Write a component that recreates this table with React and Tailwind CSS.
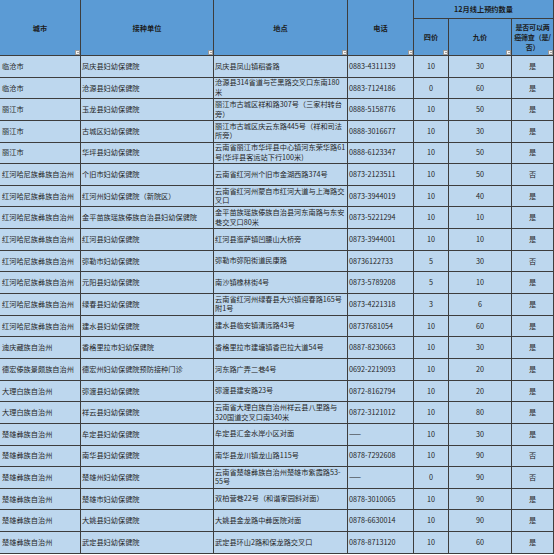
const rows = [
  ['临沧市', '凤庆县妇幼保健院', ['凤庆县凤山镇稻香路'], '0883-4311139', '10', '30', '是'],
  ['临沧市', '沧源县妇幼保健院', ['沧源县314省道与芒黑路交叉口东南180', '米'], '0883-7124186', '0', '60', '是'],
  ['丽江市', '玉龙县妇幼保健院', ['丽江市古城区祥和路307号（三家村转台', '旁）'], '0888-5158776', '10', '50', '是'],
  ['丽江市', '古城区妇幼保健院', ['丽江市古城区庆云东路445号（祥和司法', '所旁）'], '0888-3016677', '10', '30', '是'],
  ['丽江市', '华坪县妇幼保健院', ['云南省丽江市华坪县中心镇河东荣华路61', '号(华坪县客运站下行100米)'], '0888-6123347', '10', '50', '是'],
  ['红河哈尼族彝族自治州', '个旧市妇幼保健院', ['云南省红河州个旧市金湖西路374号'], '0873-2123511', '10', '50', '否'],
  ['红河哈尼族彝族自治州', '红河州妇幼保健院（新院区）', ['云南省红河州蒙自市红河大道与上海路交', '叉口'], '0873-3944019', '10', '40', '是'],
  ['红河哈尼族彝族自治州', '金平苗族瑶族傣族自治县妇幼保健院', ['金平苗族瑶族傣族自治县河东南路与东安', '巷交叉口80米'], '0873-5221294', '10', '10', '是'],
  ['红河哈尼族彝族自治州', '红河县妇幼保健院', ['红河县迤萨镇凹腰山大桥旁'], '0873-3944001', '10', '10', '是'],
  ['红河哈尼族彝族自治州', '弥勒市妇幼保健院', ['弥勒市弥阳街道民康路'], '08736122733', '5', '30', '否'],
  ['红河哈尼族彝族自治州', '元阳县妇幼保健院', ['南沙镇橡林街4号'], '0873-5789208', '5', '10', '是'],
  ['红河哈尼族彝族自治州', '绿春县妇幼保健院', ['云南省红河州绿春县大兴镇迎春路165号', '附1号'], '0873-4221318', '3', '6', '是'],
  ['红河哈尼族彝族自治州', '建水县妇幼保健院', ['建水县临安镇清远路43号'], '08737681054', '10', '60', '是'],
  ['迪庆藏族自治州', '香格里拉市妇幼保健院', ['香格里拉市建塘镇香巴拉大道54号'], '0887-8230663', '10', '30', '是'],
  ['德宏傣族景颇族自治州', '德宏州妇幼保健院预防接种门诊', ['河东路广弄二巷4号'], '0692-2219093', '10', '20', '是'],
  ['大理白族自治州', '弥渡县妇幼保健院', ['弥渡县建安路23号'], '0872-8162794', '10', '20', '是'],
  ['大理白族自治州', '祥云县妇幼保健院', ['云南省大理白族自治州祥云县八里路与', '320国道交叉口南340米'], '0872-3121012', '10', '80', '是'],
  ['楚雄彝族自治州', '牟定县妇幼保健院', ['牟定县汇金水岸小区对面'], '——', '10', '30', '是'],
  ['楚雄彝族自治州', '南华县妇幼保健院', ['南华县龙川镇龙山路115号'], '0878-7292608', '10', '90', '否'],
  ['楚雄彝族自治州', '楚雄州妇幼保健院', ['云南省楚雄彝族自治州楚雄市紫霞路53-', '55号'], '——', '0', '90', '否'],
  ['楚雄彝族自治州', '楚雄市妇幼保健院', ['双柏营巷22号（和谐家园斜对面）'], '0878-3010065', '10', '90', '是'],
  ['楚雄彝族自治州', '大姚县妇幼保健院', ['大姚县金龙路中彝医院对面'], '0878-6630014', '10', '90', '是'],
  ['楚雄彝族自治州', '武定县妇幼保健院', ['武定县环山2路和保龙路交叉口'], '0878-8713120', '10', '60', '是'],
];

function Filter() {
  return (
    <span className="absolute right-0 bottom-0 w-[5px] h-[5px] bg-[#f2f2f2] border-[0.5px] border-[#9a9a9a] flex items-center justify-center">
      <span className="block w-0 h-0 border-l-[1.5px] border-r-[1.5px] border-t-[1.5px] border-l-transparent border-r-transparent border-t-[#555]" />
    </span>
  );
}

function Head({ children, span }) {
  return (
    <div className={"relative bg-[#5b9bd5] flex items-center justify-center text-center font-bold text-[#1c1c1c] leading-[10px] " + (span ? 'row-span-2' : '')}>
      {children}
      <Filter />
    </div>
  );
}

export default function App() {
  return (
    <div className="w-[554px] h-[555px] bg-white overflow-hidden" style={{ fontFamily: '"Noto Sans CJK SC", "Noto Sans", sans-serif' }}>
      <div className="grid grid-cols-[80px_132px_133px_65px_34px_62px_41px] grid-rows-[18px_36px] auto-rows-[20.65px] gap-px bg-[#3d3d3d] pr-px pb-px text-[7.2px]">
        <Head span>城市</Head>
        <Head span>接种单位</Head>
        <Head span>地点</Head>
        <Head span>电话</Head>
        <div className="col-span-3 bg-[#5b9bd5] flex items-center justify-center font-bold text-[#1c1c1c]">12月线上预约数量</div>
        <Head>四价</Head>
        <Head>九价</Head>
        <Head>
          <span className="whitespace-nowrap text-[7px] tracking-[-0.2px] leading-[10px]">是否可以两<br />癌筛查（是/<br />否）</span>
        </Head>
        {rows.map((r, i) => (
          <div key={i} className="contents text-[#262626]">
            <div className="bg-[#bdd7ee] flex items-center pl-[2px] whitespace-nowrap">{r[0]}</div>
            <div className="bg-[#bdd7ee] flex items-center pl-[1px] whitespace-nowrap">{r[1]}</div>
            <div className="bg-[#bdd7ee] flex flex-col justify-center pl-[1px] leading-[9.5px] whitespace-nowrap">
              {r[2].map((l, j) => <span key={j}>{l}</span>)}
            </div>
            <div className="bg-[#bdd7ee] flex items-center pl-[1px] whitespace-nowrap">{r[3]}</div>
            <div className="bg-[#bdd7ee] flex items-center justify-center">{r[4]}</div>
            <div className="bg-[#bdd7ee] flex items-center justify-center">{r[5]}</div>
            <div className="bg-[#bdd7ee] flex items-center justify-center">{r[6]}</div>
          </div>
        ))}
      </div>
    </div>
  );
}
